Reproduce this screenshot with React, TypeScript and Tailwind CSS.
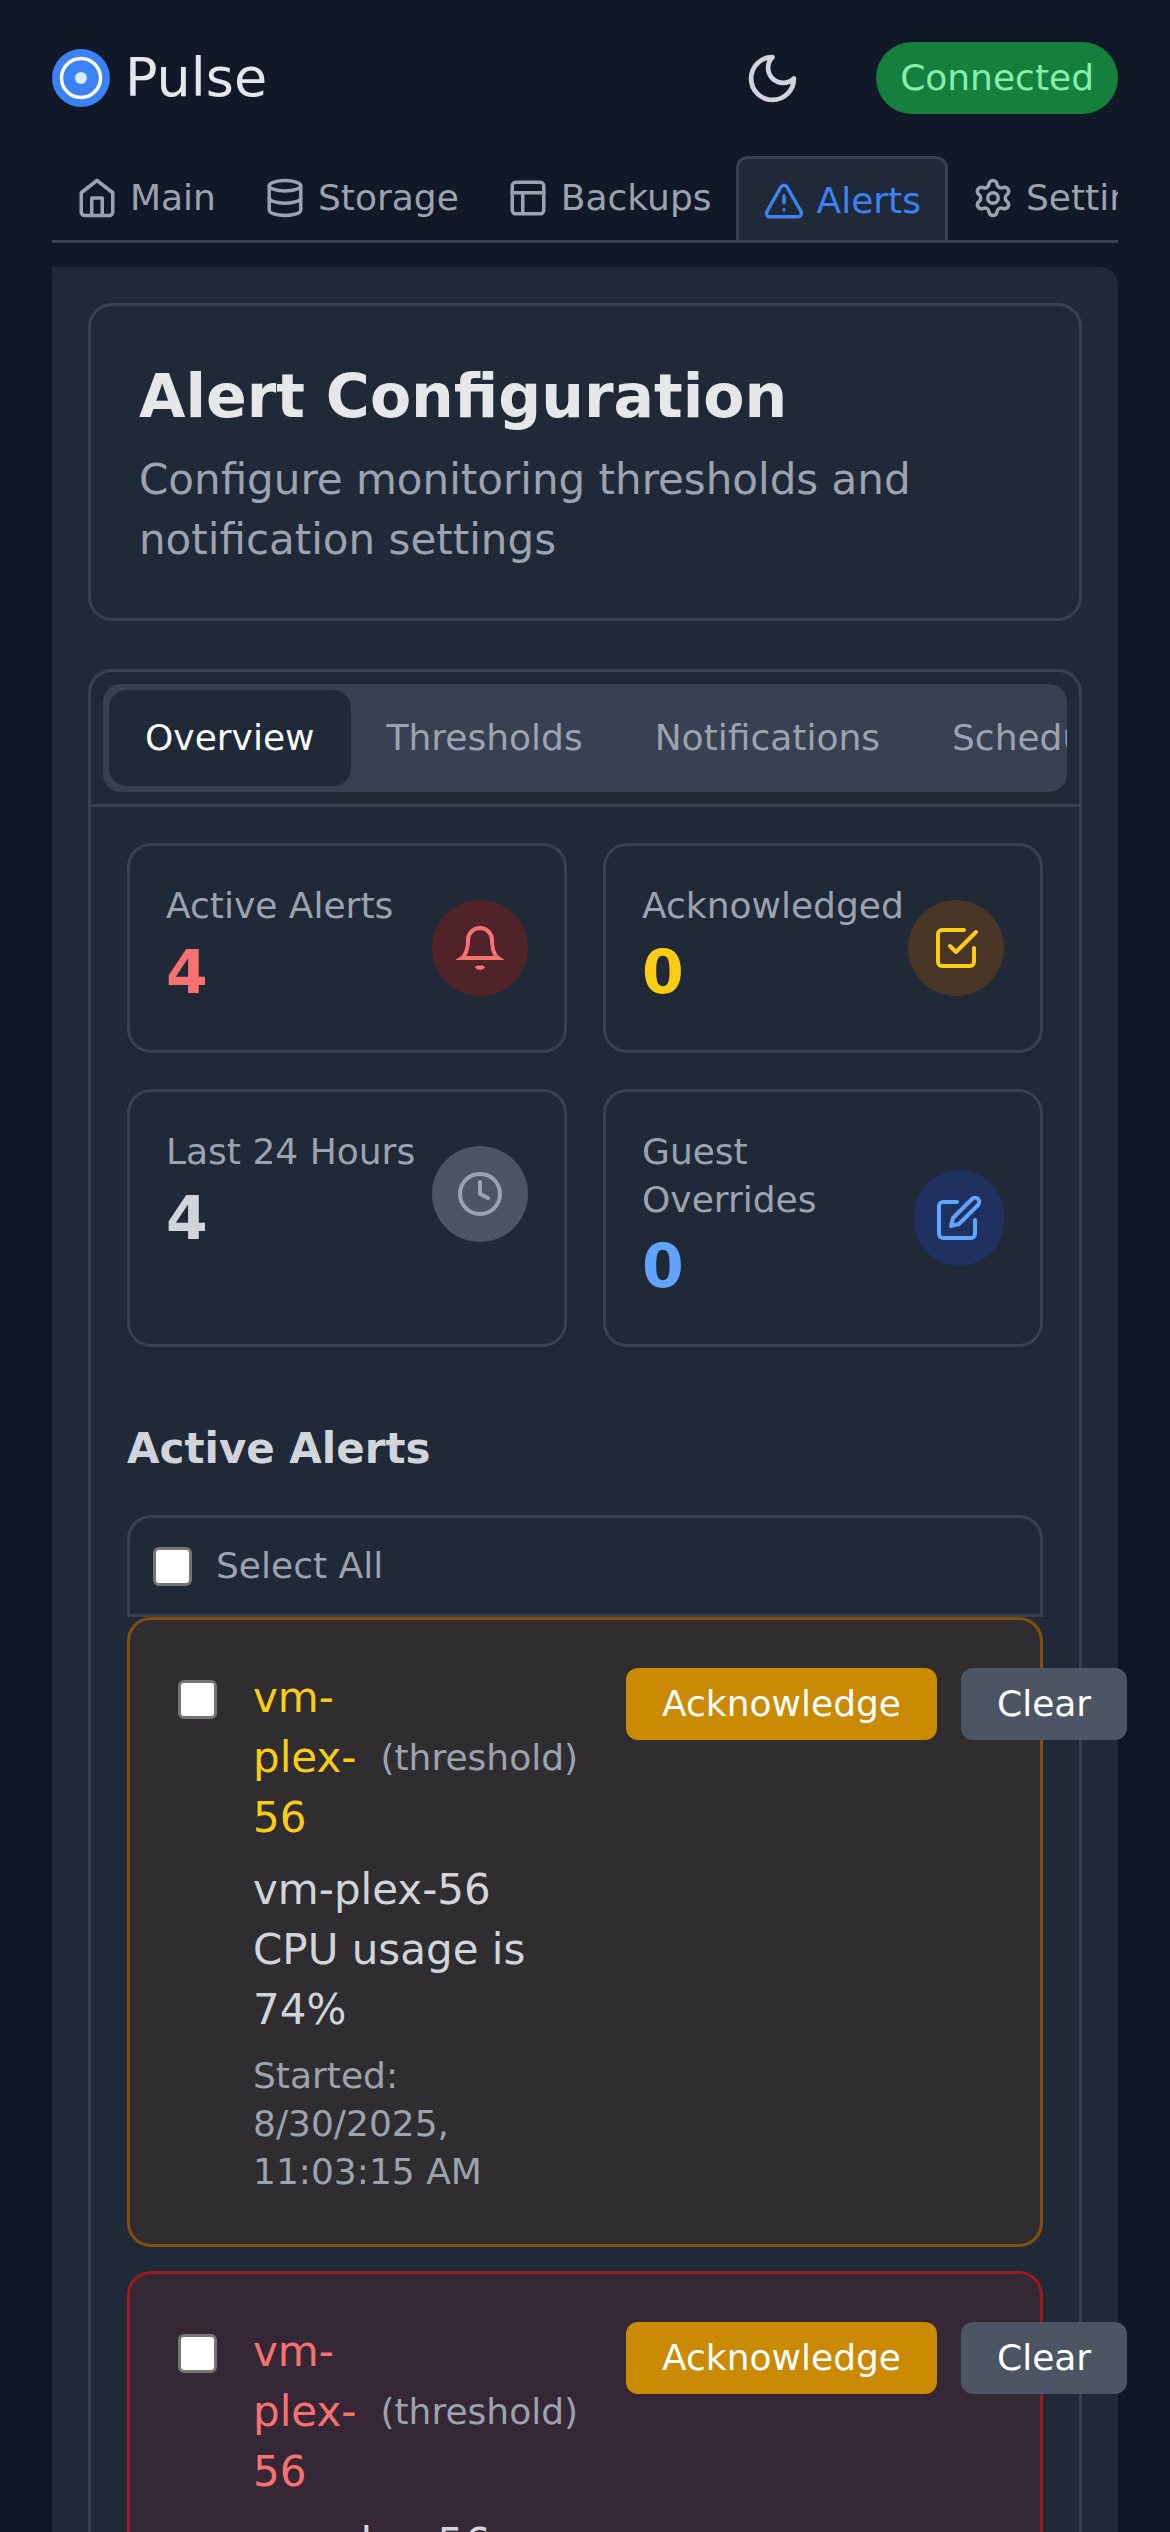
import React from 'react';
import { Database, Settings, TriangleAlert } from 'lucide-react';

const HomeIcon = () => (
  <svg width="42" height="42" viewBox="0 0 24 24" fill="none" stroke="currentColor" strokeWidth="2" strokeLinecap="round" strokeLinejoin="round" className="shrink-0">
    <path d="m3 9 9-7 9 7v11a2 2 0 0 1-2 2H5a2 2 0 0 1-2-2z" />
    <polyline points="9 22 9 12 15 12 15 22" />
  </svg>
);

const LayoutIcon = () => (
  <svg width="42" height="42" viewBox="0 0 24 24" fill="none" stroke="currentColor" strokeWidth="2" strokeLinecap="round" strokeLinejoin="round" className="shrink-0">
    <rect x="3" y="3" width="18" height="18" rx="2" />
    <path d="M3 9h18" />
    <path d="M9 21V9" />
  </svg>
);

const MoonIcon = () => (
  <svg width="57" height="57" viewBox="0 0 24 24" fill="none" stroke="#d1d5db" strokeWidth="2" strokeLinecap="round" strokeLinejoin="round">
    <path d="M12 3a6 6 0 0 0 9 9 9 9 0 1 1-9-9Z" />
  </svg>
);

const BellIcon = () => (
  <svg width="48" height="48" viewBox="0 0 24 24" fill="none" stroke="currentColor" strokeWidth="2" strokeLinecap="butt" strokeLinejoin="miter" strokeMiterlimit="10">
    <path d="M18 8A6 6 0 0 0 6 8c0 7-3 9-3 9h18s-3-2-3-9z" />
    <path d="M13.73 21a2 2 0 0 1-3.46 0" />
  </svg>
);

const CheckIcon = () => (
  <svg width="48" height="48" viewBox="0 0 24 24" fill="none" stroke="currentColor" strokeWidth="2" strokeLinecap="round" strokeLinejoin="round">
    <path d="m9 11 3 3L22 4" />
    <path d="M21 12v7a2 2 0 0 1-2 2H5a2 2 0 0 1-2-2V5a2 2 0 0 1 2-2h11" />
  </svg>
);

const ClockIcon = () => (
  <svg width="48" height="48" viewBox="0 0 24 24" fill="none" stroke="currentColor" strokeWidth="2" strokeLinecap="round" strokeLinejoin="round">
    <circle cx="12" cy="12" r="10" />
    <polyline points="12 6 12 12 16 14" />
  </svg>
);

const EditIcon = () => (
  <svg width="48" height="48" viewBox="0 0 24 24" fill="none" stroke="currentColor" strokeWidth="2" strokeLinecap="round" strokeLinejoin="round">
    <path d="M11 4H4a2 2 0 0 0-2 2v14a2 2 0 0 0 2 2h14a2 2 0 0 0 2-2v-7" />
    <path d="M18.5 2.5a2.121 2.121 0 0 1 3 3L12 15l-4 1 1-4 9.5-9.5z" />
  </svg>
);

const navTabs = [
  { label: 'Main', icon: <HomeIcon /> },
  { label: 'Storage', icon: <Database size={42} className="shrink-0" /> },
  { label: 'Backups', icon: <LayoutIcon /> },
  { label: 'Alerts', icon: <TriangleAlert size={42} className="shrink-0" />, active: true },
  { label: 'Settings', icon: <Settings size={42} className="shrink-0" /> },
];

const stats = [
  { label: 'Active Alerts', value: '4', valueClass: 'text-[#f87171]', circleClass: 'bg-[#502329] text-[#f87171]', icon: <BellIcon /> },
  { label: 'Acknowledged', value: '0', valueClass: 'text-[#facc15]', circleClass: 'bg-[#4a3627] text-[#facc15]', icon: <CheckIcon /> },
  { label: 'Last 24 Hours', value: '4', valueClass: 'text-[#d1d5db]', circleClass: 'bg-[#4b5563] text-[#9ca3af]', icon: <ClockIcon /> },
  { label: 'Guest Overrides', value: '0', valueClass: 'text-[#60a5fa]', circleClass: 'bg-[#1e3160] text-[#60a5fa]', icon: <EditIcon /> },
];

const alerts = [
  { cardClass: 'border-[#854d0e] bg-[#2f2d30]', nameClass: 'text-[#facc15]', usage: '74%' },
  { cardClass: 'border-[#991b1b] bg-[#352735]', nameClass: 'text-[#f87171]', usage: '92%' },
];

const Checkbox = ({ className = '' }: { className?: string }) => (
  <input
    type="checkbox"
    readOnly
    className={`appearance-none w-[39px] h-[39px] shrink-0 rounded-[6px] border-[3px] border-[#767676] bg-white ${className}`}
  />
);

export default function App() {
  return (
    <div className="h-[2532px] overflow-hidden bg-[#111827] px-[52px] pt-[42px] font-['DejaVu_Sans',sans-serif]">
      {/* Header */}
      <div className="flex items-center justify-between mb-[42px]">
        <div className="flex items-center gap-[15px]">
          <svg width="58" height="58" viewBox="0 0 58 58" className="shrink-0">
            <circle cx="29" cy="29" r="29" fill="#3b82f6" />
            <circle cx="29" cy="29" r="19.5" fill="none" stroke="#ffffff" strokeWidth="3.5" />
            <circle cx="29" cy="29" r="6" fill="#dbeafe" />
          </svg>
          <span className="text-[54px] leading-[72px] text-[#e5e7eb]">Pulse</span>
        </div>
        <div className="flex items-center gap-[75px]">
          <MoonIcon />
          <div className="rounded-full bg-[#15803d] px-[24px] py-[12px] text-[36px] leading-[48px] text-[#86efac]">
            Connected
          </div>
        </div>
      </div>

      {/* Nav tabs */}
      <div className="flex items-start overflow-hidden border-b-[3px] border-[#374151] h-[87px]">
        {navTabs.map(tab =>
          tab.active ? (
            <div
              key={tab.label}
              className="flex items-center gap-[12px] shrink-0 h-[84px] px-[24px] pt-[18px] pb-[15px] rounded-t-[12px] border-[3px] border-b-0 border-[#374151] bg-[#1f2937] text-[#3b82f6] text-[36px] leading-[48px]"
            >
              {tab.icon}
              <span>{tab.label}</span>
            </div>
          ) : (
            <div
              key={tab.label}
              className="flex items-center gap-[12px] shrink-0 h-[84px] px-[24px] py-[18px] text-[#9ca3af] text-[36px] leading-[48px]"
            >
              {tab.icon}
              <span>{tab.label}</span>
            </div>
          )
        )}
      </div>

      {/* Panel */}
      <div className="mt-[24px] bg-[#1f2937] rounded-tr-[18px] p-[36px] shadow-[0_30px_45px_-9px_rgba(0,0,0,0.1),0_12px_18px_-6px_rgba(0,0,0,0.1)]">
        <div className="rounded-[24px] border-[3px] border-[#374151] p-[48px]">
          <h1 className="text-[60px] leading-[84px] font-bold text-[#e5e7eb]">Alert Configuration</h1>
          <p className="mt-[12px] text-[42px] leading-[60px] text-[#9ca3af]">
            Configure monitoring thresholds and notification settings
          </p>
        </div>

        <div className="mt-[48px] rounded-t-[24px] border-[3px] border-[#374151]">
          {/* Sub tabs */}
          <div className="p-[12px] border-b-[3px] border-[#374151]">
            <div className="flex overflow-hidden rounded-[18px] bg-[#374151] p-[6px] text-[36px] leading-[48px]">
              <div className="shrink-0 rounded-[18px] bg-[#1f2937] px-[36px] py-[24px] text-[#f9fafb]">Overview</div>
              <div className="shrink-0 px-[36px] py-[24px] text-[#9ca3af]">Thresholds</div>
              <div className="shrink-0 px-[36px] py-[24px] text-[#9ca3af]">Notifications</div>
              <div className="shrink-0 px-[36px] py-[24px] text-[#9ca3af]">Schedule</div>
            </div>
          </div>

          <div className="p-[36px]">
            {/* Stat cards */}
            <div className="grid grid-cols-2 gap-[36px]">
              {stats.map(stat => (
                <div
                  key={stat.label}
                  className="rounded-[24px] border-[3px] border-[#374151] p-[36px] shadow-[0_3px_6px_rgba(0,0,0,0.05)]"
                >
                  <div className="flex items-center justify-between">
                    <div>
                      <div className="text-[36px] leading-[48px] text-[#9ca3af]">{stat.label}</div>
                      <div className={`text-[60px] leading-[84px] font-bold ${stat.valueClass}`}>{stat.value}</div>
                    </div>
                    <div className={`flex items-center justify-center w-[96px] h-[96px] rounded-full ${stat.circleClass}`}>
                      {stat.icon}
                    </div>
                  </div>
                </div>
              ))}
            </div>

            {/* Active alerts */}
            <h2 className="mt-[72px] mb-[36px] text-[42px] leading-[60px] font-semibold text-[#d1d5db]">Active Alerts</h2>

            <div className="flex items-center gap-[24px] rounded-t-[24px] border-[3px] border-[#374151] px-[23px] py-[24px]">
              <Checkbox />
              <span className="text-[36px] leading-[48px] text-[#9ca3af]">Select All</span>
            </div>

            <div className="flex flex-col gap-[24px]">
              {alerts.map((alert, i) => (
                <div key={i} className={`rounded-[24px] border-[3px] p-[48px] ${alert.cardClass}`}>
                  <div className="flex items-start gap-[48px]">
                    <div className="flex items-start gap-[36px]">
                      <Checkbox className="mt-[12px]" />
                      <div>
                        <div className="flex items-center gap-[24px]">
                          <span className={`text-[42px] leading-[60px] ${alert.nameClass}`}>vm-plex-56</span>
                          <span className="text-[36px] leading-[48px] text-[#9ca3af]">(threshold)</span>
                        </div>
                        <p className="mt-[12px] text-[42px] leading-[60px] text-[#d1d5db]">
                          vm-plex-56 CPU usage is {alert.usage}
                        </p>
                        <p className="mt-[12px] text-[36px] leading-[48px] text-[#9ca3af]">
                          Started: 8/30/2025, 11:03:15 AM
                        </p>
                      </div>
                    </div>
                    <div className="flex gap-[24px] shrink-0">
                      <button className="rounded-[12px] bg-[#ca8a04] px-[36px] py-[12px] text-[36px] leading-[48px] text-white">
                        Acknowledge
                      </button>
                      <button className="rounded-[12px] bg-[#4b5563] px-[36px] py-[12px] text-[36px] leading-[48px] text-white">
                        Clear
                      </button>
                    </div>
                  </div>
                </div>
              ))}
            </div>
          </div>
        </div>
      </div>
    </div>
  );
}
